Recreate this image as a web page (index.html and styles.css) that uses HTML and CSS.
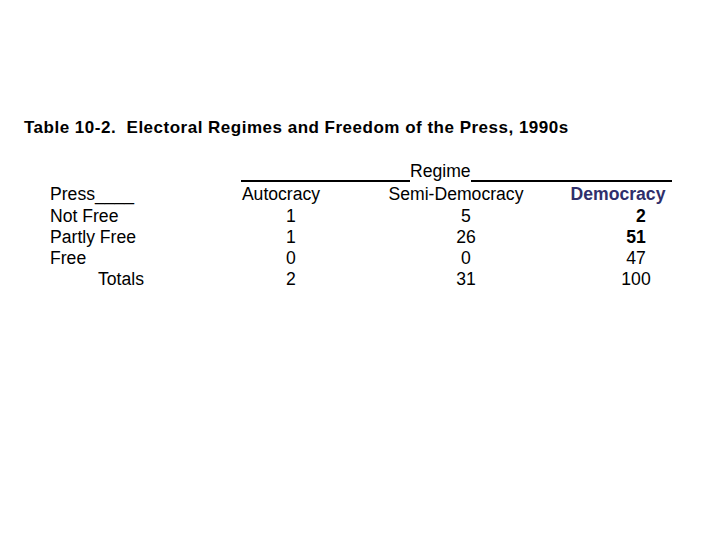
FILE: index.html
```html
<!DOCTYPE html>
<html lang="en">
<head>
<meta charset="utf-8">
<title>Table 10-2. Electoral Regimes and Freedom of the Press, 1990s</title>
<link rel="stylesheet" href="styles.css">
</head>
<body>
<div class="page">
  <h1 class="title">Table 10-2.&nbsp; Electoral Regimes and Freedom of the Press, 1990s</h1>
  <div class="table">
    <div class="blank"></div>
    <div class="regime"><span class="rule rule-left"></span><span class="regime-text">Regime</span><span class="rule rule-right"></span></div>

    <div class="label">Press____</div>
    <div class="head">Autocracy</div>
    <div class="head">Semi-Democracy</div>
    <div class="head dem">Democracy</div>

    <div class="label">Not Free</div>
    <div class="num">1</div>
    <div class="num">5</div>
    <div class="num num3 b nudge">2</div>

    <div class="label">Partly Free</div>
    <div class="num">1</div>
    <div class="num">26</div>
    <div class="num num3 b">51</div>

    <div class="label">Free</div>
    <div class="num">0</div>
    <div class="num">0</div>
    <div class="num num3">47</div>

    <div class="label total">Totals</div>
    <div class="num">2</div>
    <div class="num">31</div>
    <div class="num num3">100</div>
  </div>
</div>
</body>
</html>
```

FILE: styles.css
```css
html, body {
  margin: 0;
  padding: 0;
  background: #ffffff;
}

.page {
  width: 720px;
  height: 540px;
  font-family: "Liberation Sans", Arial, sans-serif;
  color: #000000;
  padding-top: 118px;
  box-sizing: border-box;
}

.title {
  margin: 0 0 0 24px;
  font-size: 17px;
  letter-spacing: 0.5px;
  font-weight: bold;
  line-height: 20px;
  white-space: nowrap;
}

.table {
  margin-top: 23px;
  padding-left: 50px;
  display: grid;
  grid-template-columns: 181px 100px 250px 74px;
  font-size: 17.6px;
  line-height: 21.3px;
}

.blank {
  margin-bottom: 2px;
}

.regime {
  grid-column: 2 / 5;
  margin: 0 -17px 2px 10px;
  display: flex;
  align-items: flex-start;
}

.rule {
  height: 19px;
  border-bottom: 2px solid #000000;
}

.rule-left {
  width: 169px;
}

.rule-right {
  flex: 1;
}

.regime-text {
  white-space: nowrap;
}

.label {
  white-space: nowrap;
}

.total {
  padding-left: 48px;
}

.head {
  text-align: center;
  white-space: nowrap;
}

.dem {
  margin: 0 -11px;
  font-weight: bold;
  color: #2f2f6b;
}

.num {
  text-align: center;
  padding-left: 20px;
}

.num3 {
  padding-left: 36px;
}

.nudge {
  padding-left: 46px;
}

.b {
  font-weight: bold;
}
```
